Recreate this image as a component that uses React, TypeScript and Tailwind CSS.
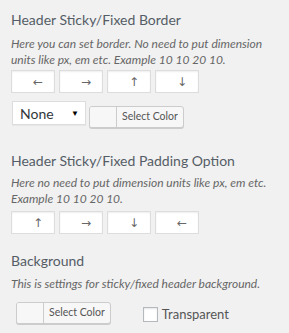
import React from "react";

const font = { fontFamily: 'Lato, "Liberation Sans", sans-serif' };

function ArrowInput({ arrow }: { arrow: string }) {
  return (
    <div className="w-[44px] h-[23px] bg-white border border-[#ddd] shadow-[inset_0_1px_2px_rgba(0,0,0,0.07)] flex items-center justify-end pr-[11px] text-[12px] text-[#666] font-['DejaVu_Sans']">
      {arrow}
    </div>
  );
}

function ColorButton() {
  return (
    <div className="flex h-[22px] border border-[#ccc] rounded-[3px] bg-[#f7f7f7] shadow-[0_1px_0_#ccc] overflow-hidden">
      <div className="w-[27px] border-r border-[#ccc] bg-[#f7f7f7]" />
      <div className="px-[5px] flex items-center text-[10.5px] text-[#555]">Select Color</div>
    </div>
  );
}

export default function App() {
  return (
    <div className="w-[289px] h-[333px] bg-[#f1f1f1] pl-[11px] pt-[10px] overflow-hidden" style={font}>
      <h3 className="text-[14px] leading-[20px] text-[#555d66] font-normal">Header Sticky/Fixed Border</h3>
      <p className="mt-[6px] text-[12px] leading-[16px] italic text-[#666]">
        Here you can set border. No need to put dimension units like px, em etc. Example 10 10 20 10.
      </p>
      <div className="mt-[2px] flex gap-[4px]">
        <ArrowInput arrow="←" />
        <ArrowInput arrow="→" />
        <ArrowInput arrow="↑" />
        <ArrowInput arrow="↓" />
      </div>
      <div className="mt-[8px] flex gap-[3px]">
        <div className="ml-[1px] w-[74px] h-[24px] bg-white border border-[#ddd] shadow-[0_1px_1px_rgba(0,0,0,0.04)] flex items-center justify-between pl-[7px] pr-[6px] text-[14px] text-[#32373c]">
          <span>None</span>
          <span className="text-[8px] text-black">▼</span>
        </div>
        <div className="mt-[5px]">
          <ColorButton />
        </div>
      </div>

      <h3 className="mt-[23px] text-[14px] leading-[20px] text-[#555d66] font-normal">Header Sticky/Fixed Padding Option</h3>
      <p className="mt-[4px] text-[12px] leading-[16px] italic text-[#666]">
        Here no need to put dimension units like px, em etc. Example 10 10 20 10.
      </p>
      <div className="mt-[4px] flex gap-[4px]">
        <ArrowInput arrow="↑" />
        <ArrowInput arrow="→" />
        <ArrowInput arrow="↓" />
        <ArrowInput arrow="←" />
      </div>

      <h3 className="mt-[17px] text-[14px] leading-[20px] text-[#555d66] font-normal">Background</h3>
      <p className="mt-[5px] text-[12px] leading-[16px] italic text-[#666]">
        This is settings for sticky/fixed header background.
      </p>
      <div className="mt-[9px] flex items-center">
        <div className="ml-[5px]">
          <ColorButton />
        </div>
        <label className="ml-[32px] mt-[4px] flex items-center gap-[4px] text-[13px] text-[#555]">
          <span className="w-[15px] h-[15px] bg-white border border-[#b4b9be] shadow-[inset_0_1px_2px_rgba(0,0,0,0.1)]" />
          Transparent
        </label>
      </div>
    </div>
  );
}
